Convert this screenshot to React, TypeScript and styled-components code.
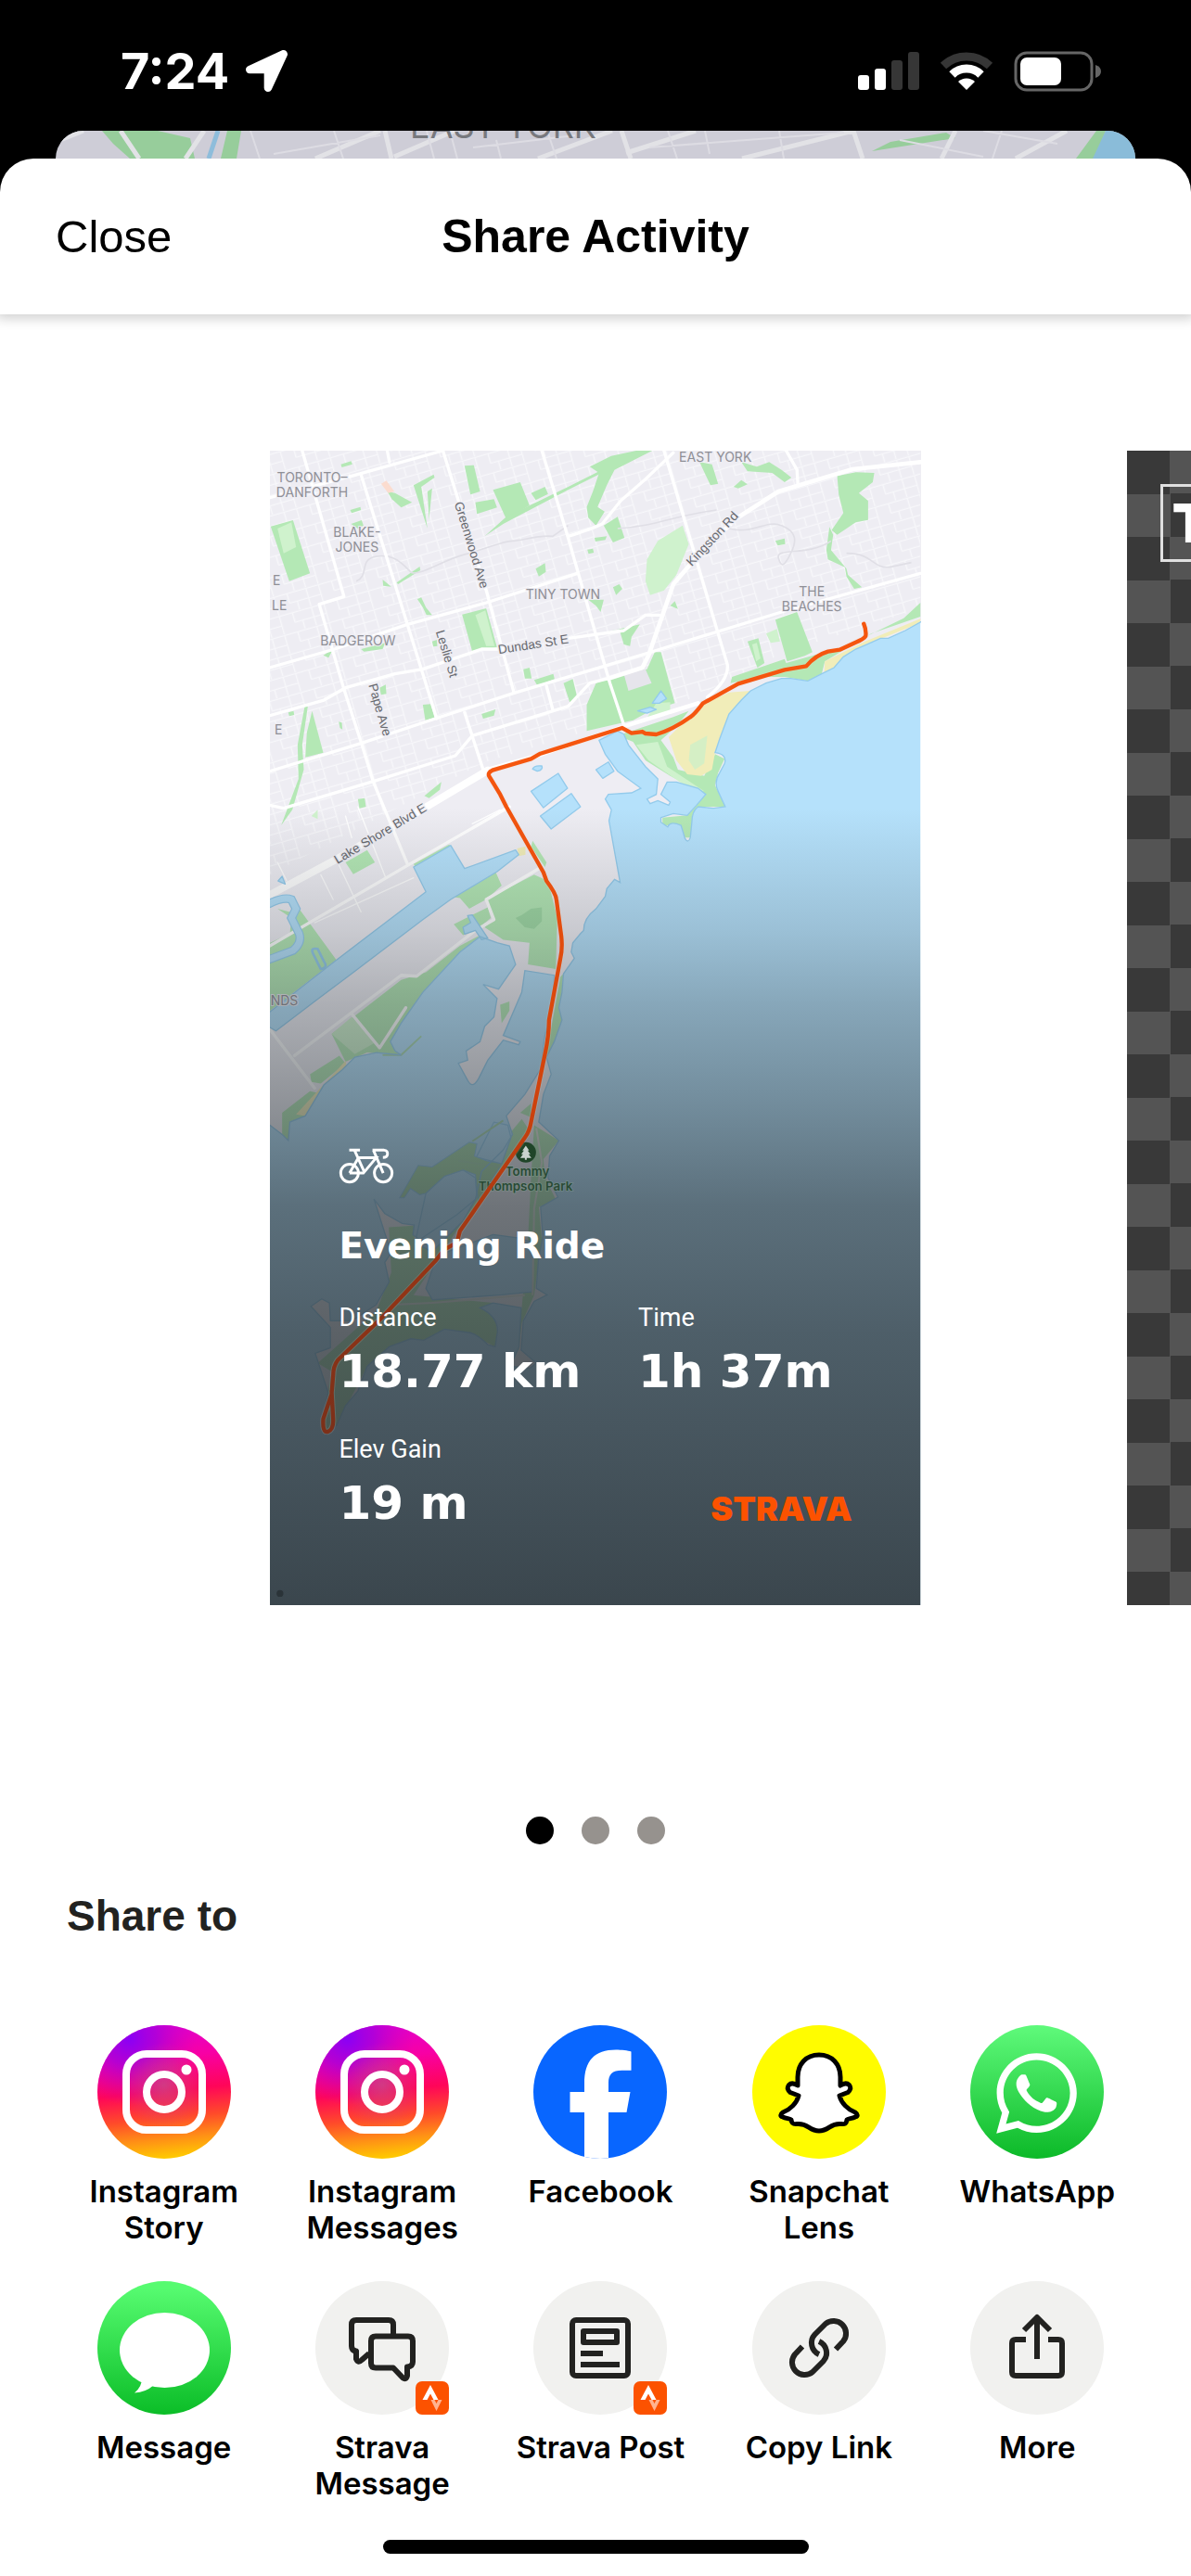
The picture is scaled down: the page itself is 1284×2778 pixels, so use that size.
import React from 'react';
import styled, { createGlobalStyle } from 'styled-components';
import { FaLocationArrow, FaWhatsapp } from 'react-icons/fa';

const sans = "'Liberation Sans', Arial, sans-serif";
const ui = "Inter, 'Liberation Sans', sans-serif";

const GlobalStyle = createGlobalStyle`
  *, *::before, *::after { box-sizing: border-box; }
  body { margin: 0; background: #000; font-family: ${sans}; }
  button { border: 0; background: none; padding: 0; margin: 0; font: inherit; color: inherit; cursor: pointer; }
  svg { display: block; }
`;

const Page = styled.div`
  min-height: 100vh;
  display: flex;
  flex-direction: column;
  overflow: hidden;
`;

const StatusBar = styled.div`
  display: flex;
  align-items: center;
  justify-content: space-between;
  height: 141px;
  padding: 12px 96px 0 130px;
  color: #fff;
`;

const StatusGroup = styled.div<{ $gap: number }>`
  display: flex;
  align-items: center;
  gap: ${(p) => p.$gap}px;
`;

const Clock = styled.span`
  font: 700 54px/60px ${ui};
`;

const BackCard = styled.div`
  height: 30px;
  margin: 0 60px;
  border-radius: 30px 30px 0 0;
  overflow: hidden;
  background: #cecdd7;
  svg { width: 100%; height: 100%; }
`;

const Sheet = styled.main`
  flex: 1;
  display: flex;
  flex-direction: column;
  background: #fff;
  border-radius: 36px 36px 0 0;
`;

const Header = styled.header`
  display: grid;
  grid-template-columns: 1fr auto 1fr;
  align-items: center;
  height: 168px;
  padding: 0 60px;
  border-radius: 36px 36px 0 0;
  box-shadow: 0 0 14px 4px rgba(0, 0, 0, 0.2);
  clip-path: inset(0 0 -24px 0);
`;

const CloseButton = styled.button`
  && { font: 400 49px/60px ${sans}; }
  justify-self: start;
`;

const Title = styled.h1`
  margin: 0;
  font: 700 50px/60px ${sans};
`;

const Carousel = styled.section`
  display: flex;
  gap: 22.4%;
  padding: 147px 0 0 22.7%;
  overflow: hidden;
`;

const Card = styled.article`
  flex: none;
  width: calc(100% / 77.3 * 54.6);
  aspect-ratio: 701 / 1245;
  display: grid;
  overflow: hidden;
  color: #fff;
  > * { grid-area: 1 / 1; min-width: 0; min-height: 0; }
`;

const MapSvg = styled.svg`
  width: 100%;
  height: 100%;
`;

const RideInfo = styled.div`
  position: relative;
  align-self: end;
  padding: 0 74px 80px;
`;

const RideTitle = styled.h2`
  margin: 44px 0 38px;
  font: 700 39px/46px 'DejaVu Sans', sans-serif;
`;

const Stats = styled.div`
  display: grid;
  grid-template-columns: 7fr 5fr;
  row-gap: 38px;
  align-items: end;
`;

const Stat = styled.div`
  display: grid;
  gap: 12px;
`;

const StatLabel = styled.span`
  font: 400 27px/32px Roboto, sans-serif;
`;

const StatValue = styled.span`
  font: 700 50px/60px 'DejaVu Sans', sans-serif;
  white-space: nowrap;
`;

const Wordmark = styled.span`
  justify-self: end;
  padding-bottom: 4px;
  font: 900 36px/40px ${ui};
  color: #fc5200;
`;

const CheckerCard = styled(Card)`
  align-items: start;
  justify-items: start;
  padding: 36px;
  background: repeating-conic-gradient(#545454 0% 25%, #393939 0% 50%) 0 0 / 93px 93px;
`;

const Tag = styled.span`
  width: 480px;
  height: 84px;
  padding-left: 10px;
  border: 3px solid #e0e0e0;
  font: 900 58px/78px ${ui};
`;

const Dots = styled.div`
  display: flex;
  justify-content: center;
  gap: 30px;
  margin-top: 228px;
`;

const Dot = styled.span<{ $active?: boolean }>`
  width: 30px;
  height: 30px;
  border-radius: 50%;
  background: ${(p) => (p.$active ? '#000' : '#96928e')};
`;

const ShareHeading = styled.h2`
  margin: 49px 72px 0;
  font: 700 46px/56px ${sans};
  color: #222220;
`;

const ShareGrid = styled.div`
  display: grid;
  grid-template-columns: repeat(5, 1fr);
  gap: 38px 0;
  margin-top: 90px;
  padding: 0 48px 0 59px;
`;

const ShareButton = styled.button`
  display: flex;
  flex-direction: column;
  align-items: center;
  gap: 16px;
  min-height: 238px;
`;

const ShareLabel = styled.span`
  font: 600 33px/39px ${ui};
  color: #000;
  white-space: pre-line;
  text-align: center;
`;

const HomeBar = styled.div`
  width: 459px;
  max-width: 60%;
  height: 15px;
  margin: auto auto 24px;
  border-radius: 8px;
  background: #000;
`;

const LAND =
  'M0 20H2180V580L2090 630 2035 655 2010 655 1965 675 1930 690 1890 715 1860 750 1820 770 1775 793 1720 785 1690 785 1640 800 1590 825 1560 855 1520 900 1490 980 1475 1025Q1515 1030 1506 1060L1490 1090Q1470 1120 1485 1150L1508 1200 1470 1205 1420 1200Q1400 1215 1400 1250L1395 1300Q1388 1320 1378 1303L1365 1260Q1330 1245 1322 1265L1300 1250V1235L1340 1222 1385 1228 1415 1195 1445 1160 1420 1140 1350 1120 1320 1120 1300 1160 1330 1185 1325 1195 1290 1180 1265 1190 1255 1175 1285 1160 1290 1110 1250 1070 1195 1000 1180 965 1160 955 1100 985 1120 1030 1160 1085 1235 1140 1205 1155 1130 1160 1120 1175 1140 1210 1132 1245 1168 1445 1150 1435 1125 1465 1120 1490 1090 1530Q1050 1560 1050 1600L1040 1610 1015 1640 1010 1670 1020 1690 985 1740 980 1800 970 1850 980 1890 955 1960 930 2010 945 2065 920 2130 905 2220 970 2280 940 2330 935 2400 967 2463 911 2495 918 2590 904 2663 897 2758 932 2779 890 2800 855 2863 848 2958 897 3000 876 3016 813 3010 841 2947 848 2821 757 2805 715 2821Q775 2850 771 2900L764 2947 740 2940Q700 2900 673 2900L600 2890 533 2926 491 2921 421 2947 350 3010 320 3090 280 3137 252 3200 217 3231 203 3200 224 3095 182 2968 231 2950 231 2884 168 2816 203 2792 228 2805 231 2863 301 2863 379 2811 421 2737 407 2674 428 2642 407 2579 372 2469 407 2516 463 2548 502 2553 498 2585 520 2600 640 2520 700 2470 720 2380 790 2310 820 2260 800 2200 860 2130 910 2050 925 1940 950 1840 955 1745 860 1730 850 1800 790 1940 845 1960 840 1970 790 1955 740 2020 710 2080Q690 2115 675 2085L645 2030 675 2020 670 1990 715 1960 730 1910 760 1880 770 1820 725 1775 775 1790 830 1710 810 1650 770 1640 715 1620 650 1670 530 1800 460 1900 425 1960 440 1990 460 2003 380 1995 310 2010 270 2050 210 2100 150 2200 100 2220 95 2280 75 2260 35 2230 0 2210Z';

const GREENS = [
  '265 92 298 82 302 92 268 102', '38 293 110 273 165 445 98 470', '665 97 695 95 715 180 684 190',
  '757 175 845 150 875 225 800 270', '700 215 760 205 770 232 705 253', '880 185 925 165 935 188 895 208',
  '500 160 565 125 568 135 525 165 545 300', '545 180 560 170 550 270', '415 180 440 185 495 215 460 232 430 205',
  '730 325 800 262 1000 165 1139 95 1139 105 1000 175 790 285', '295 240 328 230 330 240 300 250', '298 285 332 273 338 290 320 300',
  '445 475 520 423 522 435 450 480', '400 465 428 488 402 485', '512 528 525 523 540 555 560 580 542 580 530 555',
  '657 578 735 558 770 685 690 698', '330 690 408 670 400 690 340 698', '208 710 240 690 225 718', '560 665 575 660 577 680 564 682',
  '855 755 875 750 882 785 860 785', '890 790 952 770 956 787 900 808', '985 800 1015 787 1030 850 1005 862',
  '390 815 410 805 412 835 395 838', '530 870 555 868 568 912 538 920', '720 900 765 885 760 905 725 915',
  '172 890 208 1025 150 1040 155 960', '148 875 158 875 140 1000 145 1080 108 1210 72 1260 128 1110 125 1000', '95 895 112 890 114 903 98 907',
  '258 925 268 928 270 950 262 945', '320 1175 342 1172 346 1200 325 1205', '535 1165 590 1120 585 1145 550 1172', '895 430 925 412 928 440 905 455',
  '1070 100 1139 65 1220 48 1272 48 1150 110 1125 160 1095 230 1118 245 1090 290 1065 265 1060 230 1080 180 1100 120',
  '1115 290 1160 262 1182 330 1145 345', '1085 330 1125 325 1120 337 1088 342', '1062 368 1080 365 1083 378 1066 382',
  '1425 85 1465 92 1485 155 1460 160', '1560 85 1610 100 1650 85 1690 110 1722 135 1700 150 1660 120 1580 115', '1535 165 1560 143 1580 157 1550 170',
  '1870 130 1930 118 1990 120 1985 150 1940 185 1970 210 1970 272 1930 280 1870 320 1852 305 1890 250 1875 190',
  '1845 295 1857 320 1850 370 1900 430 1905 450 1950 490 1925 495 1900 455 1895 425 1840 400 1835 370',
  '1670 595 1740 570 1790 700 1765 712 1708 730', '1580 665 1615 655 1635 735 1612 750', '1525 800 1530 780 1700 722 1705 735 1900 680 2085 590 2139 540 2139 585 1980 640 1830 730 1820 770 1775 793 1700 780 1620 780',
  '1280 700 1300 700 1345 865 1265 890 1210 920 1060 955 1060 870 1090 800 1180 770 1255 755', '1080 645 1232 610 1205 650 1200 680 1180 675 1165 625',
  '1145 490 1165 480 1175 495 1155 515', '1065 530 1115 530 1105 570 1090 550', '1330 550 1345 535 1355 560', '1670 340 1700 332 1702 350 1678 355',
  '1160 970 1340 910 1390 890 1350 940 1300 985 1340 1040 1355 1080 1440 1100 1475 1030 1506 1045 1485 1090 1475 1130 1508 1200 1420 1200 1395 1300 1378 1300 1365 1260 1305 1260 1305 1235 1385 1228 1445 1160 1330 1100 1250 1050 1210 990',
  '280 1380 350 1340 375 1380 305 1418', '500 1385 615 1322 625 1332 510 1400', '735 1500 890 1420 935 1440 965 1560 960 1725 870 1710 875 1640 790 1630 730 1590 760 1560',
  '620 1490 765 1410 785 1455 735 1500 680 1530 650 1495', '630 1580 740 1525 750 1560 700 1600 660 1615', '60 1530 100 1540 130 1530 250 1695 35 1860 35 1640 100 1610 105 1560',
  '235 1935 460 1760 540 1735 650 1650 715 1615 650 1690 530 1810 425 1960 440 1990 460 2003 350 1995 280 2025', '165 2065 260 2005 280 2030 200 2095 170 2090',
  '75 2190 165 2120 190 2125 150 2200 100 2220 95 2280 75 2260', '885 1310 930 1380 925 1395 880 1330', '780 1840 810 1830 810 1860 785 1900',
  '975 1750 985 1740 975 1850 980 1890 940 2010 930 2000', '845 2190 880 2160 880 2205', '800 2270 850 2210 870 2240 820 2330 700 2490 640 2570 500 2780 400 2900 240 3030 190 3000 380 2830 450 2650 640 2540 720 2400',
  '420 2560 500 2555 505 2620 560 2560 600 2600 520 2700 420 2860 370 2850 430 2740',
  '890 2230 970 2280 920 2340 925 2400 960 2470 905 2495 915 2600 890 2780 850 2870 840 2960 830 2940 850 2820 870 2600 880 2400',
  '500 2780 757 2805 771 2900 764 2947 673 2900 533 2926 421 2947 350 3010 252 3200 217 3231 203 3200 240 3000 400 2850',
];

const LIGHT_GREENS = [
  '1255 400 1290 340 1370 290 1390 350 1350 450 1310 500 1265 515 1250 470', '60 300 105 280 120 360 80 380', '700 580 732 565 762 680 735 680',
  '1595 675 1610 670 1622 720 1608 730', '1285 865 1330 862 1330 900 1250 920', '170 1230 190 1210 190 1240', '1640 640 1675 625 1685 665 1655 670',
  '1220 1000 1290 990 1320 1070 1440 1150 1390 1140 1260 1050', '235 1935 300 1880 380 1960 310 2000',
];

const SANDS = [
  '1430 870 1520 830 1590 825 1560 855 1520 900 1490 980 1475 1025 1465 1080 1430 1100 1385 1095 1350 1050 1325 975 1390 910',
  '1830 730 1890 700 1960 665 2139 592 2139 605 1965 675 1890 715 1860 750 1828 765', '835 1335 862 1328 862 1355 840 1360',
  '120 2195 180 2130 280 2022 285 2050 210 2100 150 2200', '232 2760 280 2740 330 2730 345 2790 350 2830 320 2850 290 2800 240 2780',
];

const MAJOR = [
  'M35 200L300 130 595 48', 'M140 48L275 520 195 545 275 820 330 990 370 1120 480 1385', 'M415 48L422 85', 'M330 125L480 610 575 915', 'M595 48L735 500 825 832',
  'M915 48L1000 330 1080 610 1135 800 1180 935', 'M35 750L245 690 480 610 735 540 1030 445', 'M35 905L210 855 280 815 440 770 530 755 720 690 775 690M1000 655L1180 630 1250 580 1295 580',
  'M35 1085L330 995 570 915 825 832 1250 705 1690 570 2139 445', 'M35 1195L80 1205 370 1118 635 1035 690 970 1000 875 1070 800 1130 785', 'M665 895L725 1080', 'M930 810L950 885',
  'M1310 48L1485 640 1515 740Q1520 790 1450 845', 'M1000 325Q1080 300 1110 285L1170 210 1250 140 1340 55', 'M1705 48L1740 110 1743 160',
  'M35 1650L480 1390 810 1200', 'M905 1400L735 1500 760 1565 700 1600 510 1748 460 1745 115 2005', 'M35 1920L180 2110', 'M300 1870L390 1980 475 1850',
];

const Streets = [
  { t: 'Greenwood Ave', x: 632, y: 218, r: 73 }, { t: 'Leslie St', x: 572, y: 634, r: 73 }, { t: 'Pape Ave', x: 354, y: 806, r: 74 },
  { t: 'Dundas St E', x: 776, y: 706, r: -9 }, { t: 'Kingston Rd', x: 1400, y: 424, r: -47 }, { t: 'Lake Shore Blvd E', x: 254, y: 1386, r: -31 },
];

const Areas = [
  { t: 'TORONTO–', x: 172, y: 150 }, { t: 'DANFORTH', x: 172, y: 199 }, { t: 'BLAKE-', x: 317, y: 327 }, { t: 'JONES', x: 317, y: 376 },
  { t: 'BADGEROW', x: 320, y: 677 }, { t: 'TINY TOWN', x: 983, y: 529 }, { t: 'EAST YORK', x: 1476, y: 83 }, { t: 'THE', x: 1788, y: 518 },
  { t: 'BEACHES', x: 1788, y: 567 }, { t: 'E', x: 57, y: 482 }, { t: 'LE', x: 66, y: 565 }, { t: 'E', x: 63, y: 966 }, { t: 'NDS', x: 82, y: 1841 },
];

const ROUTE =
  'M1956 608Q1965 630 1962 648 1955 658 1930 668L1878 692 1840 698Q1800 710 1770 745L1700 757 1550 802 1435 866Q1410 900 1395 910 1340 950 1285 966L1250 963 1240 957 1205 962 1175 945 1000 1000 910 1028 880 1045 755 1082Q738 1090 745 1102L780 1160 800 1200 920 1412 930 1440Q960 1480 962 1500L978 1620Q982 1660 975 1690L938 1890Q938 1940 925 2000L880 2220Q875 2250 860 2270L700 2500Q680 2530 650 2572L640 2610 600 2632 570 2670 400 2850 255 2990Q240 3010 240 3040L235 3100 208 3180Q205 3225 222 3222 242 3215 240 3180L235 3090';

const poly = (points: string[], fill: string) => points.map((p, i) => <polygon key={i} points={p} fill={fill} />);

function RideMap() {
  return (
    <MapSvg viewBox="35 48 2104 3735" preserveAspectRatio="xMidYMid slice" aria-hidden="true">
      <defs>
        <clipPath id="land"><path d={LAND} /></clipPath>
        <pattern id="blocks" width="150" height="64" patternUnits="userSpaceOnUse" patternTransform="rotate(-16)">
          <path d="M0 4H150M10 4V64M52 4V64M96 4V36M0 36H52M96 36H150M122 36V64" stroke="#f7f7fa" strokeWidth="4" fill="none" />
        </pattern>
        <linearGradient id="shade" x1="0" y1="0" x2="0" y2="1">
          <stop offset=".31" stopColor="#2d353a" stopOpacity="0" />
          <stop offset=".415" stopColor="#2d353a" stopOpacity=".19" />
          <stop offset=".48" stopColor="#2d353a" stopOpacity=".34" />
          <stop offset=".576" stopColor="#2d353a" stopOpacity=".51" />
          <stop offset=".654" stopColor="#2d353a" stopOpacity=".66" />
          <stop offset=".766" stopColor="#2d353a" stopOpacity=".76" />
          <stop offset="1" stopColor="#2d353a" stopOpacity=".9" />
        </linearGradient>
        <linearGradient id="route" gradientUnits="userSpaceOnUse" x1="0" y1="1100" x2="0" y2="3200">
          <stop offset="0" stopColor="#f5560f" />
          <stop offset=".5" stopColor="#cf420c" />
          <stop offset=".75" stopColor="#963515" />
          <stop offset="1" stopColor="#7c3019" />
        </linearGradient>
      </defs>
      <rect x="35" y="48" width="2104" height="3735" fill="#b5e1fb" />
      <path d={LAND} fill="#eeedf3" />
      <g clipPath="url(#land)">
        <path d="M35 48H2139V560L1700 700 1400 850 720 1060 35 1420Z" fill="url(#blocks)" />
        {poly(GREENS, '#b4e8b5')}
        {poly(LIGHT_GREENS, '#cff2cd')}
        {poly(SANDS, '#f1edb9')}
        <polygon points="1395 1000 1450 970 1440 1060 1410 1080 1390 1050" fill="#d5efc5" />
        <polygon points="1180 770 1250 755 1270 800 1195 825" fill="#e6e5ec" />
        <polygon points="395 155 412 145 438 180 418 185" fill="#fbdccf" />
        <polygon points="850 1550 880 1530 915 1525 915 1570 890 1595 860 1590 830 1560" fill="#9fd9a4" />
        <path d="M315 470C360 450 320 400 380 390S470 420 490 440 600 400 660 385 790 340 820 340 900 320 950 325L1000 290" stroke="#e0dfe6" strokeWidth="5" fill="none" />
        <path d="M1160 300C1300 290 1330 260 1480 240M1520 300C1600 320 1640 270 1690 290S1740 340 1720 380 1690 430 1680 395 1780 390 1850 340M1900 380C1990 380 1980 430 2040 425L2110 410" stroke="#e0dfe6" strokeWidth="5" fill="none" />
      </g>
      <g fill="none" stroke="#fff" strokeWidth="10" strokeLinejoin="round" strokeLinecap="round">
        {MAJOR.map((d) => <path key={d} d={d} />)}
        <path d="M35 1485L250 1370 500 1225 740 1082" strokeWidth="24" />
        <path d="M740 1080L900 1035 1180 940 1420 865" strokeWidth="14" />
        <path d="M1130 785L1240 750 1260 710 1340 480 1400 410 1540 270 1680 180 1920 108 2139 85" strokeWidth="14" />
        <g strokeWidth="4">
          <path d="M200 1420L240 1500M250 1370L330 1540M280 1230L300 1300M320 1200L410 1430M60 1380L90 1440M180 1575L500 1430M690 1255L780 1210" />
        </g>
      </g>
      <g fill="#b5e1fb" stroke="#93cbec" strokeWidth="4" strokeLinejoin="round">
        <polygon points="20 1875 245 1700 540 1475 500 1395 620 1325 665 1400 830 1340 840 1355 770 1410 620 1500 530 1565 300 1740 180 1830 55 1925 20 1905" />
        <polygon points="880 1150 968 1092 998 1140 920 1203" />
        <polygon points="910 1230 1010 1157 1040 1200 945 1272" />
        <polygon points="1090 1080 1130 1055 1148 1085 1112 1108" />
        <path d="M885 1078Q890 1065 915 1068 920 1080 900 1085Z" />
        <path d="M1272 865L1300 825 1318 850 1295 865ZM1225 890L1265 878 1285 885 1255 897Z" />
        <path d="M660 1590L685 1575 675 1552 690 1550 740 1625 720 1630 700 1600 665 1612Z" />
        <path d="M62 1440L75 1425 85 1450Z" />
        <polygon points="631 2632 757 2584 841 2595 890 2611 883 2769 785 2779 561 2795 540 2758 575 2653" />
        <path d="M700 2340L760 2220 805 2230 815 2270 785 2355 710 2335Z" />
        <path d="M505 2610L540 2450 600 2395 660 2375 700 2400 705 2460 660 2540 560 2640Z" />
        <path d="M175 1675Q165 1655 190 1660L210 1700Q225 1720 200 1725Z" fill="none" strokeWidth="8" />
      </g>
      <path d="M30 1515Q80 1490 105 1500L120 1530 105 1560 130 1610Q140 1640 110 1665L30 1695" fill="none" stroke="#93cbec" strokeWidth="28" />
      <path d="M30 1515Q80 1490 105 1500L120 1530 105 1560 130 1610Q140 1640 110 1665L30 1695" fill="none" stroke="#b5e1fb" strokeWidth="21" />
      <polygon points="455 2465 515 2360 560 2365 620 2325 680 2285 705 2290 697 2330 735 2345 785 2355 710 2480 700 2390 660 2375 600 2395 540 2450 520 2455 490 2435 470 2465" fill="#a9dcab" stroke="#93cbec" strokeWidth="3" />
      <path d="M400 2003L460 2003 525 1942M690 2282L790 2215M645 2345L780 2365" fill="none" stroke="#a9d8b0" strokeWidth="6" />
      <path d="M450 2810L560 2805 860 2780M897 2240L915 2350 890 2500 885 2780" fill="none" stroke="#e4e6dc" strokeWidth="6" />
      <path d={LAND} fill="none" stroke="#93cbec" strokeWidth="4" />
      <g fontFamily="Inter, sans-serif" fontSize="42" fill="#8e8f96" textAnchor="middle" stroke="#eeedf3" strokeWidth="6" paintOrder="stroke">
        {Areas.map((a, i) => <text key={i} x={a.x} y={a.y}>{a.t}</text>)}
      </g>
      <g fontFamily="'Liberation Sans', sans-serif" fontSize="41" fill="#66686e" stroke="#eeedf3" strokeWidth="8" paintOrder="stroke">
        {Streets.map((s) => <text key={s.t} transform={`translate(${s.x} ${s.y}) rotate(${s.r})`}>{s.t}</text>)}
      </g>
      <rect x="35" y="48" width="2104" height="3735" fill="url(#shade)" />
      <g fontFamily="Inter, sans-serif" fontWeight="600" fontSize="40" fill="#294a35" textAnchor="middle" stroke="#7f9a8c" strokeOpacity=".5" strokeWidth="5" paintOrder="stroke">
        <text x="868" y="2395">Tommy</text>
        <text x="862" y="2443">Thompson Park</text>
      </g>
      <circle cx="863" cy="2318" r="33" fill="#1f4528" />
      <path d="M863 2296L874 2312H869L878 2324H872L881 2336H866V2342H860V2336H845L854 2324H848L857 2312H852Z" fill="#c9d3cf" />
      <path d={ROUTE} fill="none" stroke="#f4d9c6" strokeOpacity=".15" strokeWidth="19" strokeLinejoin="round" />
      <path d={ROUTE} fill="none" stroke="url(#route)" strokeWidth="13" strokeLinejoin="round" strokeLinecap="round" />
      <circle cx="68" cy="3745" r="11" fill="#2a3338" />
    </MapSvg>
  );
}

function BikeIcon() {
  return (
    <svg width="60" height="39" viewBox="256 1108 182 118" fill="none" stroke="#fff" strokeWidth="9" aria-hidden="true">
      <circle cx="292" cy="1190" r="29" />
      <circle cx="402" cy="1190" r="29" />
      <path d="M291 1115H326M308 1115L341 1188M292 1190H337L379 1140H321L292 1190M367 1115H405Q417 1116 416 1128 415 1139 401 1139M370 1115L402 1190" />
    </svg>
  );
}

function BackMap() {
  return (
    <BackCard>
      <svg viewBox="0 0 1164 30" preserveAspectRatio="xMidYMid slice" aria-hidden="true">
        <path d="M50 0H110L145 8 150 30H80L62 14ZM185 0H200L195 30H178Z" fill="#97cd9b" />
        <path d="M175 0L165 30" stroke="#8ebddb" strokeWidth="5" />
        <path d="M970 8L880 22 900 12 960 2ZM1100 30L1122 0H1132L1120 30Z" fill="#97cd9b" />
        <path d="M1132 0H1164V30H1118Z" fill="#8abcd9" />
        <path d="M90 30L70 0M30 0L0 12M140 30L160 0M350 0L280 30M355 0L362 30M365 28L430 0M520 30L600 0M690 0L615 24M610 0L620 30M740 30L860 0M860 0L870 30M970 0L955 30M1090 0L1035 30" stroke="#e2e2e6" strokeWidth="5" fill="none" />
        <path d="M220 30L210 0M235 25L350 5M300 0L310 30M400 0L408 30M425 0L433 30M450 18L560 5M480 30L475 10M540 30L530 0M660 0L670 30M700 0L705 25M640 18L850 2M780 0L785 30M910 10L1000 28M1000 0L1080 14M1020 0L1010 30" stroke="#dddce3" strokeWidth="2" fill="none" />
        <text x="382" y="8" fontFamily="Inter, sans-serif" fontSize="36" fill="#77787d">EAST YORK</text>
      </svg>
    </BackCard>
  );
}

const Disc = ({ fill = '#f1f1ef', children }: { fill?: string; children: React.ReactNode }) => (
  <svg width="144" height="144" viewBox="0 0 144 144" aria-hidden="true">
    <circle cx="72" cy="72" r="72" fill={fill} />
    {children}
  </svg>
);

const StravaBadge = () => (
  <g transform="translate(108 108)">
    <rect width="36" height="36" rx="7" fill="#fc5200" />
    <path d="M16 4L7.500 20H12.500L16 13.500 19.500 20H24.500Z" fill="#fff" />
    <path d="M24.500 20L22.500 24 20.500 20H16.500L22.500 32 28.500 20Z" fill="#ffb38f" />
  </g>
);

const Instagram = ({ id }: { id: string }) => (
  <Disc fill={`url(#${id}-base)`}>
    <defs>
      <linearGradient id={`${id}-base`} x1=".4" y1="0" x2=".5" y2="1">
        <stop offset="0" stopColor="#e000cf" />
        <stop offset=".25" stopColor="#f800a4" />
        <stop offset=".5" stopColor="#ff0559" />
        <stop offset=".7" stopColor="#ff4a2a" />
        <stop offset=".86" stopColor="#ff9215" />
        <stop offset="1" stopColor="#ffcb00" />
      </linearGradient>
      <radialGradient id={`${id}-violet`} cx=".24" cy=".1" r=".5">
        <stop offset="0" stopColor="#8a00f5" />
        <stop offset=".4" stopColor="#a000e0" stopOpacity=".75" />
        <stop offset="1" stopColor="#c800c0" stopOpacity="0" />
      </radialGradient>
      <radialGradient id={`${id}-core`} cx=".5" cy=".45" r=".32">
        <stop offset="0" stopColor="#c4508a" stopOpacity=".7" />
        <stop offset="1" stopColor="#d8407a" stopOpacity="0" />
      </radialGradient>
    </defs>
    <circle cx="72" cy="72" r="72" fill={`url(#${id}-violet)`} />
    <circle cx="72" cy="72" r="72" fill={`url(#${id}-core)`} />
    <g fill="none" stroke="#fff" strokeWidth="8">
      <rect x="31" y="31" width="82" height="82" rx="22" />
      <circle cx="72" cy="72" r="19" />
    </g>
    <circle cx="96" cy="48" r="5.500" fill="#fff" />
  </Disc>
);

const Facebook = () => (
  <Disc fill="#0866ff">
    <clipPath id="fb-disc"><circle cx="72" cy="72" r="72" /></clipPath>
    <path clipPath="url(#fb-disc)" fill="#fff" d="M55 144V94H39.500V72H55V63C55 38 66 26.500 89 26.500 95 26.500 102 27.200 105.500 28.500V48.700H95.500C85 48.700 81 53 81 62V72H104.500L100.500 94H81V144Z" />
  </Disc>
);

const Snapchat = () => (
  <Disc fill="#fffc00">
    <path
      fill="#fff" stroke="#000" strokeWidth="5" strokeLinejoin="round"
      d="M72 32C58 32 49 42 49 56V65C46 63 42 62 39.500 64.500 37 67.500 38.500 70.500 41 72.500L50 76C48 84 41 91 33 94 30 96 30 98 33 99 36 100.500 41 101 42 102 42.500 106 44 107 48 106.500 60 105 61 114 72 114S84 105 96 106.500C100 107 101.500 106 102 102 103 101 108 100.500 111 99 114 98 114 96 111 94 103 91 96 84 94 76L103 72.500C105.500 70.500 107 67.500 104.500 64.500 102 62 98 63 95 65V56C95 42 86 32 72 32Z"
    />
  </Disc>
);

const WhatsApp = () => (
  <Disc fill="url(#wa)">
    <linearGradient id="wa" x1="0" y1="0" x2="0" y2="1">
      <stop offset="0" stopColor="#5ffa7b" />
      <stop offset="1" stopColor="#0cb928" />
    </linearGradient>
    <FaWhatsapp x={22} y={24} size={99} color="#fff" />
  </Disc>
);

const Message = () => (
  <Disc fill="url(#msg)">
    <linearGradient id="msg" x1="0" y1="0" x2="0" y2="1">
      <stop offset=".05" stopColor="#56fb70" />
      <stop offset="1" stopColor="#0bbd27" />
    </linearGradient>
    <ellipse cx="72.500" cy="74.500" rx="48.500" ry="40.500" fill="#fff" />
    <path d="M48 105Q48 114 40 120.500 52 120 61 112Z" fill="#fff" />
  </Disc>
);

const line = { fill: 'none', stroke: '#222220', strokeWidth: 6, strokeLinejoin: 'round' as const };

const StravaMessage = () => (
  <Disc>
    <g {...line}>
      <path d="M84 57V47Q84 42 79 42H44Q39 42 39 47V70Q39 75 44 75.500V84Q46 89 50 85L58 78" />
      <path d="M65 59.500H100Q105 59.500 105 64.500V87Q105 92 99 92.500V102Q98 107 94 104L84 93.500H65Q60 93.500 60 88.500V64.500Q60 59.500 65 59.500Z" />
    </g>
    <StravaBadge />
  </Disc>
);

const StravaPost = () => (
  <Disc>
    <g {...line}>
      <rect x="42" y="42" width="60" height="60" rx="4" />
      <path d="M54 54H90V66H54ZM51 78H75M51 90H93" />
    </g>
    <StravaBadge />
  </Disc>
);

const CopyLink = () => (
  <Disc>
    <g {...line}>
      <path d="M90 73.500L98 65A13.500 13.500 0 0 0 79 46L67.500 57.500A13.500 13.500 0 0 0 72 79" />
      <path d="M54 70.500L46 79A13.500 13.500 0 0 0 65 98L76.500 86.500A13.500 13.500 0 0 0 72 65" />
    </g>
  </Disc>
);

const More = () => (
  <Disc>
    <g {...line}>
      <path d="M60 63H49Q45 63 45 67V98Q45 102 49 102H95Q99 102 99 98V67Q99 63 95 63H84M72 84V40M58 53L72 39 86 53" />
    </g>
  </Disc>
);

const targets = [
  { label: 'Instagram\nStory', icon: <Instagram id="ig-story" /> },
  { label: 'Instagram\nMessages', icon: <Instagram id="ig-messages" /> },
  { label: 'Facebook', icon: <Facebook /> },
  { label: 'Snapchat\nLens', icon: <Snapchat /> },
  { label: 'WhatsApp', icon: <WhatsApp /> },
  { label: 'Message', icon: <Message /> },
  { label: 'Strava\nMessage', icon: <StravaMessage /> },
  { label: 'Strava Post', icon: <StravaPost /> },
  { label: 'Copy Link', icon: <CopyLink /> },
  { label: 'More', icon: <More /> },
];

export default function App() {
  return (
    <Page>
      <GlobalStyle />
      <StatusBar>
        <StatusGroup $gap={18}>
          <Clock>7:24</Clock>
          <FaLocationArrow size={45} />
        </StatusGroup>
        <StatusGroup $gap={22}>
          <svg width="66" height="44" viewBox="0 0 66 44" aria-hidden="true">
            <g fill="#fff">
              <rect x="0" y="26" width="12" height="16" rx="3" />
              <rect x="18" y="19" width="12" height="23" rx="3" />
            </g>
            <g fill="#363636">
              <rect x="36" y="10" width="12" height="32" rx="3" />
              <rect x="54" y="1" width="12" height="41" rx="3" />
            </g>
          </svg>
          <svg width="58" height="44" viewBox="0 0 58 44" fill="none" strokeWidth="9" aria-hidden="true">
            <path d="M4 16A36 36 0 0 1 54 16" stroke="#363636" />
            <path d="M13.500 25.500A22 22 0 0 1 44.500 25.500" stroke="#fff" />
            <path d="M29 42L20 33A13 13 0 0 1 38 33Z" fill="#fff" />
          </svg>
          <svg width="95" height="44" viewBox="0 0 95 44" aria-hidden="true">
            <rect x="2" y="2" width="82" height="40" rx="12" fill="none" stroke="#666" strokeWidth="3" />
            <rect x="7" y="7" width="44" height="30" rx="7" fill="#fff" />
            <path d="M88 15Q94 17 94 22T88 29Z" fill="#666" />
          </svg>
        </StatusGroup>
      </StatusBar>
      <BackMap />
      <Sheet>
        <Header>
          <CloseButton type="button">Close</CloseButton>
          <Title>Share Activity</Title>
        </Header>
        <Carousel>
          <Card>
            <RideMap />
            <RideInfo>
              <BikeIcon />
              <RideTitle>Evening Ride</RideTitle>
              <Stats>
                <Stat>
                  <StatLabel>Distance</StatLabel>
                  <StatValue>18.77 km</StatValue>
                </Stat>
                <Stat>
                  <StatLabel>Time</StatLabel>
                  <StatValue>1h 37m</StatValue>
                </Stat>
                <Stat>
                  <StatLabel>Elev Gain</StatLabel>
                  <StatValue>19 m</StatValue>
                </Stat>
                <Wordmark>STRAVA</Wordmark>
              </Stats>
            </RideInfo>
          </Card>
          <CheckerCard>
            <Tag>T</Tag>
          </CheckerCard>
        </Carousel>
        <Dots>
          <Dot $active />
          <Dot />
          <Dot />
        </Dots>
        <ShareHeading>Share to</ShareHeading>
        <ShareGrid>
          {targets.map((t) => (
            <ShareButton key={t.label} type="button">
              {t.icon}
              <ShareLabel>{t.label}</ShareLabel>
            </ShareButton>
          ))}
        </ShareGrid>
        <HomeBar />
      </Sheet>
    </Page>
  );
}
